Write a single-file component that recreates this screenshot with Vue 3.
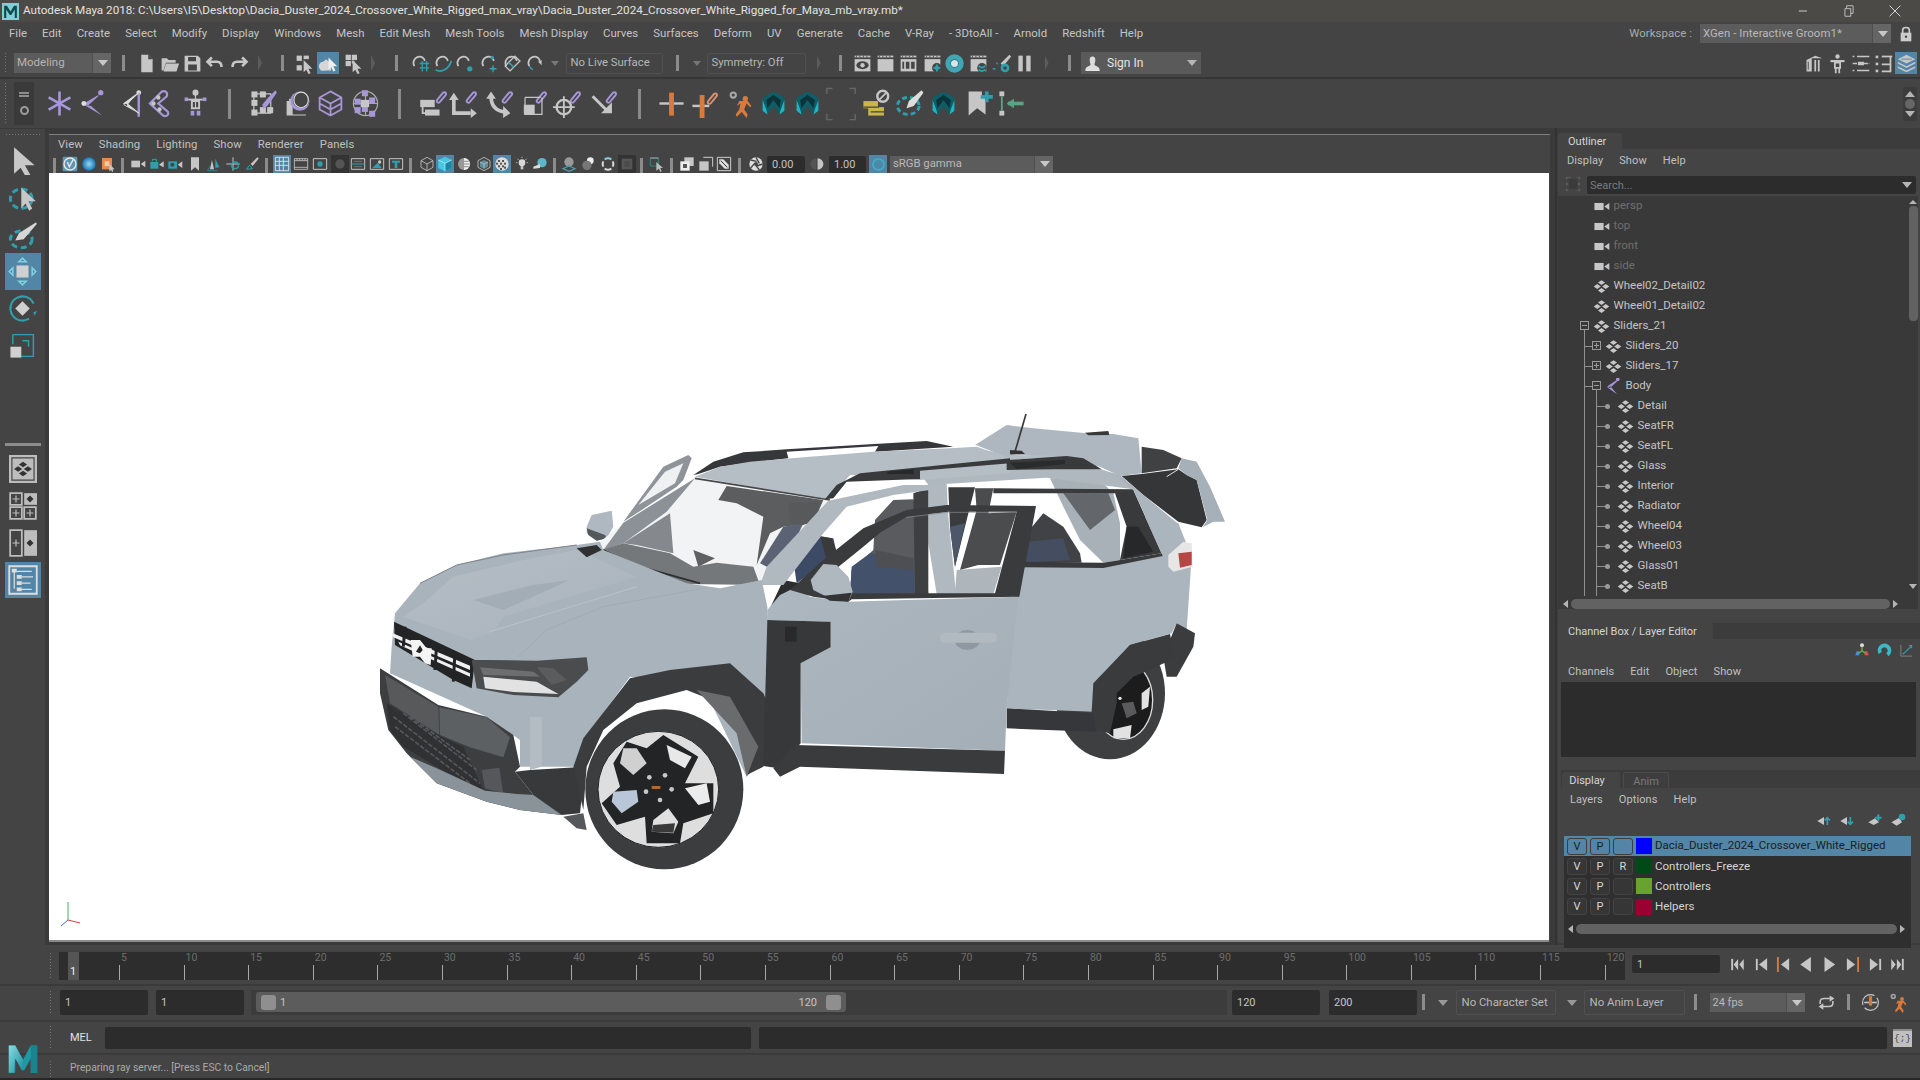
<script setup>
const G = '#c6c6c6', PU = '#a796d8', TE = '#2f9fae', OR = '#d9793b', D = '#444444'
const p = (d, f = G) => `<path d="${d}" fill="${f}" fill-rule="evenodd"/>`
const s = (d, c = G, w = 2) => `<path d="${d}" fill="none" stroke="${c}" stroke-width="${w}"/>`
const r = (x, y, w, h, f = G) => `<rect x="${x}" y="${y}" width="${w}" height="${h}" fill="${f}"/>`
const o = (x, y, R, f = G) => `<circle cx="${x}" cy="${y}" r="${R}" fill="${f}"/>`
const arrow = p('M11 8l10 10h-4.500l2.500 5-2.500 1-2.500-5-3 3z')
const clap = r(3, 3, 18, 2) + s('M5 3v2M9 3v2M13 3v2M17 3v2', D, 1) + r(3, 7, 18, 14)
const link = s('M15 9l5-6c2-1 3 1 2 2l-5 6c-2 1-3-1-2-2z', PU, 1.600)
const xfd = p('M12 3l5 3.500-5 3.500-5-3.500zM12 14l5 3.500-5 3.500-5-3.500zM6 8.500l5 3.500-5 3.500L1 12zM18 8.500l5 3.500-5 3.500-5-3.500z')
const magnet = s('M5 15c-3-5 1-11 6-11 3 0 5 2 6 5', G, 2)
const arn = p('M12 2l9 5v11l-4 3-5-7-5 7-4-3V7z', '#0f5d66') + p('M12 5l6 4-1 7-5-7-5 7-1-7z', '#0a3439') + p('M3 9l3 8 1 4-4-3zM21 9l-3 8-1 4 4-3z', '#23b4c0')
const SYM = {
  file: p('M6 2h8l5 5v15H6z') + p('M14 2v5h5z', D),
  open: p('M3 6h6l2 2h8v3H8l-3 9H3z') + p('M8 12h15l-3 9H5z'),
  save: p('M3 3h15l3 3v15H3zM7 4.500v5h9v-5zM7 13v7h10v-7z'),
  undo: s('M9 5l-5 5 5 5M4 10h11c4 0 5 3 5 6', G, 3),
  redo: s('M15 5l5 5-5 5M20 10H9c-4 0-5 3-5 6', G, 3),
  selh: r(3, 3, 6, 6) + r(3, 14, 6, 6) + r(11, 3, 6, 4) + arrow,
  selo: p('M9 7l6 5v8H3v-7z', '#d6d6d6') + o(6, 15, 5, '#d6d6d6') + p('M12 5l10 10h-4.500l2.500 5-2.500 1-2.500-5-3 3z', '#eee'),
  selc: r(3, 2, 6, 6) + r(10, 2, 6, 6) + r(3, 9, 6, 6) + r(10, 9, 3, 3) + arrow,
  sgrid: magnet + s('M11 12h11M11 17h11M14 9v12M19 9v12', TE, 1.500),
  scurve: magnet + s('M3 19c6 4 15 0 18-10', TE, 2),
  spoint: magnet + o(18, 18, 3, TE),
  sview: magnet + o(15, 5, 2, TE) + s('M16 14v8M12 18h8', TE, 1.500) + o(16, 18, 2, TE),
  ssurf: `<g transform="rotate(-45 12 12)">${s('M4 8h16v8H4z', G, 1.500)}${s('M10 8v8', TE, 2)}</g>` + magnet,
  smag: magnet + p('M15 10l4-2v6z', G) + s('M5 15c1 2 2 3 4 4', TE, 1.500),
  reye: clap + `<ellipse cx="12" cy="14" rx="7" ry="4.500" fill="#444"/>` + o(12, 14, 2.500),
  rfr: clap,
  ripr: clap + r(5, 10, 2, 8, '#444') + r(9, 10, 4, 8, '#444') + r(15, 10, 4, 8, '#444'),
  rset: clap + o(17, 17, 5.500, D) + s('M17 13v8M13 17h8', TE, 2) + o(17, 17, 2.500, TE),
  ring: `<circle cx="12" cy="12" r="7.500" fill="none" stroke="#3ea6b4" stroke-width="6"/>` + o(12, 12, 4, '#d0e8ee'),
  rseq: clap + o(16, 17, 5.500, D) + s('M12 15l4 2 4-2M12 19l4 2 4-2', TE, 2),
  batch: p('M21 2l2 2-9 11-3-3z') + o(16, 17, 5, TE) + o(16, 17, 2, D) + s('M2 18h3M6 11l2 2', TE, 1.500),
  pause: r(5, 3, 5, 18) + r(14, 3, 5, 18),
  user: p('M12 2c3 0 4 2 4 5 0 4-2 6-1 7 2 2 7 2 7 7H2c0-5 5-5 7-7 1-1-1-3-1-7 0-3 1-5 4-5z', '#ddd') + r(2, 21, 20, 1.500, '#eee'),
  mtk: p('M4 8l10-5 8 3H10v15H4z') + s('M14 8v13M18 8v13', G, 2) + s('M6 10v9', D, 1),
  hik: o(12, 4, 2.500) + r(4, 8, 16, 2.500) + s('M9 11h6v6H9zM10 17v6M14 17v6', G, 2),
  attr: s('M8 4h14M8 20h14M3 4h2M3 12h5M16 12h6M3 20h2', G, 1.500) + s('M9 9h12v6H9z', D, 1) + r(9, 10, 7, 4),
  toolset: r(3, 3, 3, 3) + r(3, 11, 3, 3) + r(3, 19, 3, 3) + r(10, 3, 12, 2) + s('M20 4v18', G, 2) + r(10, 12, 10, 2) + r(10, 20, 10, 2),
  chan: p('M12 2l10 5-10 5L2 7z') + p('M2 10l10 5 10-5v2l-10 5-10-5z') + p('M2 15l10 5 10-5v2l-10 5-10-5z') + s('M6 7h12', '#5285a6', 1),
  star: s('M12 2v20M3 7l18 10M21 7L3 17', PU, 2.200),
  joint: o(18, 3, 2.200, PU) + p('M16 5L4 12l3 2 9-8zM4 13l15 9-9-8z', PU) + o(4, 12, 2, '#ddd'),
  ik: o(18, 3, 2, '#ddd') + p('M16 4L5 12l3 2z M5 13l11 6-8-7z', '#ddd') + s('M18 3v20', PU, 2) + s('M18 3L8 12l10 8', '#ddd', 1),
  spline: s('M4 12L14 2c3-1 5 1 4 4l-7 6 8 7c1 3-2 4-4 3z', PU, 1.800) + o(11, 7, 1.800) + o(7, 12, 1.800) + o(12, 17, 1.800),
  body: o(12, 3, 2.500) + r(3, 7, 3, 3, PU) + r(18, 7, 3, 3, PU) + r(6, 8, 12, 1.500) + s('M9 10h6v6H9z', G, 1.600) + r(8, 18, 3, 4, PU) + r(13, 18, 3, 4, PU) + s('M12 5v11', G, 1),
  paint: s('M4 4h14v16H4z', G, 1) + [[2, 2], [9, 2], [2, 9], [9, 15], [2, 17], [15, 15]].map(a => r(a[0], a[1], 5, 5)).join('') + p('M22 1l1 2-7 10-4 4-1-4 4-5z', PU),
  shape: p('M5 8h3v13h11v1H3V10h2z', G) + `<ellipse cx="14" cy="10" rx="8" ry="8" fill="${PU}"/>` + `<ellipse cx="15" cy="9" rx="7" ry="7" fill="#444"/>` + `<ellipse cx="15" cy="9" rx="6" ry="6.500" fill="none" stroke="#ddd"/>`,
  latt: s('M12 2l9 5v10l-9 5-9-5V7zM3 7l9 5 9-5M12 12v10M3 12l9 5 9-5', PU, 1.500),
  clus: `<circle cx="12" cy="12" r="10" fill="none" stroke="#aaa"/>` + s('M12 2v20M2 12h20', '#aaa', 1) + [[9, 1], [15, 7], [9, 14], [15, 18], [3, 8], [3, 15]].map(a => r(a[0], a[1], 5, 5, PU)).join('') + r(8, 9, 7, 6),
  l1: link + r(1, 9, 12, 6) + r(5, 17, 12, 5) + s('M3 13v7h5', G, 1.500),
  l2: link + s('M4 9v11h14', G, 3) + p('M4 3l4 6H0zM18 16l5 4-5 4z'),
  l3: link + s('M5 6c0 8 4 12 11 13', G, 3) + p('M5 2l4 6H1zM15 14v10l6-4z'),
  l4: link + s('M5 7h13M5 7v14h14V7', G, 1) + r(4, 13, 9, 8),
  l5: link + `<circle cx="9" cy="15" r="6" fill="none" stroke="${G}" stroke-width="2"/>` + s('M9 6v18M0 15h18', G, 1.500),
  l6: link + s('M3 6l13 13', G, 2.500) + p('M10 20h9v-9z'),
  c1: r(2, 11, 20, 2) + r(10, 3, 4, 19, OR),
  c2: r(2, 13, 14, 2) + r(8, 5, 4, 19, OR) + s('M15 10l5-6c2-1 3 1 2 2l-5 6c-2 1-3-1-2-2z', '#d79272', 1.600),
  run: o(6, 5, 3, '#a8a8a8') + o(6, 5, 1.300, D) + o(16, 8, 2.200, OR) + p('M11 10h7l3 4-1 1-3-3-2 5 3 4-1 3-4-5-4 4-1-2 3-4 1-5-3 2z', OR),
  arn,
  bracket: s('M2 5V1h4M18 1h4v4M2 19v4h4M18 23h4v-4', '#666', 1),
  ref: r(2, 10, 12, 6, '#c9b54a') + r(6, 15, 13, 7, '#c9b54a') + s('M2 15h13M8 19h12', D, 1) + `<circle cx="18" cy="6" r="4.500" fill="none" stroke="${G}" stroke-width="2"/>` + s('M15 9l6-6', G, 1.500),
  lbrush: `<ellipse cx="11" cy="14" rx="9" ry="7" fill="none" stroke="${TE}" stroke-width="2.400" stroke-dasharray="4 2.500"/>` + p('M22 1l1.500 2-8 11-6 2 2-6z', '#ddd'),
  bkm: p('M3 2h11v4h3v15l-7-5-7 6z') + s('M18 2v9M13 6.500h10', TE, 3),
  piv: r(2, 2, 4, 4) + r(2, 18, 4, 4) + s('M4 6v12', '#5aa486', 1.500) + s('M22 12H9', '#5aa486', 3) + p('M8 12l6-4v8z', '#5aa486'),
  vsel: `<rect x="1" y="1" width="22" height="22" rx="2" fill="#5f94b3"/>` + `<circle cx="12" cy="12" r="9" fill="none" stroke="#e8e8e8" stroke-width="2"/>` + s('M8 9l3 7 6-11', '#e8e8e8', 2),
  ball: `<radialGradient id="bg1"><stop offset="0" stop-color="#9bd8f0"/><stop offset="1" stop-color="#1878b8"/></radialGradient><circle cx="12" cy="12" r="10" fill="url(#bg1)"/>`,
  hilit: r(3, 3, 15, 17, '#e68a4e') + r(7, 8, 7, 7, '#f2c6a3') + p('M14 12l8 8h-3l1 3-2 1-1-3-3 2z'),
  cam: r(2, 7, 13, 10) + p('M16 12l7-5v10z'),
  camlk: r(2, 9, 12, 10, TE) + p('M15 13l7-5v9z') + s('M5 8V5h6v4', TE, 1.500),
  camrot: r(2, 8, 13, 11, TE) + p('M16 13l7-5v10z') + o(8, 13, 3, D),
  bkmk: p('M6 2h12v20l-6-5-6 5z'),
  tumble: p('M6 20l3-14 3 14z', G) + s('M3 22h14M2 22l5-8', TE, 1) + p('M14 4v14l6-1z', TE),
  track: s('M12 2v20M2 12h20', G, 1.500) + `<circle cx="15" cy="14" r="5" fill="none" stroke="${TE}" stroke-width="2"/>`,
  brush: p('M20 2l2 2-9 11-3-3z') + s('M4 20l4-6 5 5z', TE, 1.500),
  grid: s('M2 2h20v20H2zM8 2v20M14 2v20M2 8h20M2 14h20', '#e8e8e8', 1.300),
  film: s('M2 4h20v16H2zM2 7h20M2 17h20M6 4v3M10 4v3M14 4v3M18 4v3', '#ccc', 1.200),
  res: s('M2 4h20v16H2z', '#ccc', 1.400) + o(12, 12, 4, TE),
  dark: o(12, 12, 7, '#555'),
  safe: s('M2 4h20v16H2z', '#ccc', 1.400) + s('M2 12h20', TE, 1.500) + s('M6 8h12M6 16h12', '#888', 1),
  mount: s('M2 4h20v16H2z', '#ccc', 1.400) + p('M5 18l8-8 6 8z', TE) + o(16, 9, 2.500),
  tbox: s('M2 4h20v16H2z', '#ccc', 1.400) + p('M6 7h12v3h-4v8h-4v-8H6z', TE),
  wire: s('M12 2l9 5v10l-9 5-9-5V7zM3 7l9 5 9-5M12 12v10', '#ccc', 1.200),
  solid: p('M12 1l10 5v12l-10 5-10-5V6z', '#45c8e0') + p('M12 11l10-5v12l-10 5z', '#1a88a5') + s('M2 6l10 5 10-5M12 11v12', '#d8f4fa', 1),
  half: `<circle cx="12" cy="12" r="9" fill="#999"/>` + p('M12 3a9 9 0 0 1 0 18z', '#eee') + s('M12 8h7M12 12h8M12 16h7', '#555', 1),
  wiret: s('M12 2l9 5v10l-9 5-9-5V7z', '#ccc', 1.200) + p('M12 6l6 3v7l-6 3-6-3V9z', '#5d8d99') + s('M6 9l6 3 6-3M12 12v7', '#ccc', 1),
  check: `<circle cx="12" cy="12" r="10" fill="#ddd"/>` + [[6, 6], [12, 6], [9, 10], [15, 10], [6, 14], [12, 14], [9, 18], [3, 10], [15, 16]].map(a => r(a[0], a[1], 3, 3, '#555')).join(''),
  light: o(12, 10, 5, '#d8d8d8') + r(10, 15, 4, 5) + s('M12 1v2M3 10h2M19 10h2M5 4l2 2M19 4l-2 2', G, 1.200),
  shad: o(15, 10, 7, '#5fb6c6') + p('M2 16l10-4v6l-10 1z', '#ddd'),
  occ: `<circle cx="12" cy="9" r="7" fill="#999"/>` + s('M3 19l9 4 9-4-9-4z', '#4b9aa7', 2),
  aa: o(14, 7, 5, '#eee') + o(9, 14, 7, '#777'),
  mb: s('M17 5A9 9 0 0 0 7 5', '#88d0dc', 3) + s('M7 19a9 9 0 0 0 10 0M5 8a9 9 0 0 0 0 8M19 8a9 9 0 0 1 0 8', '#d8d8d8', 3),
  dof: r(4, 4, 16, 16, '#555') + r(8, 8, 8, 8, '#4a4a4a'),
  isol: s('M2 3h12v12H2z', TE, 1) + s('M2 3h12', '#ccc', 1) + p('M11 9l10 9h-4l2 5-2 1-2-5-4 3z', '#bbb'),
  xray: r(8, 2, 14, 13) + r(2, 8, 14, 14, '#eee') + r(6, 12, 6, 6, '#555'),
  xray2: s('M8 2h14v14', '#ccc', 1.500) + r(2, 8, 14, 14),
  wedge: s('M2 2h20v20H2z', '#ccc', 1.500) + p('M5 5h6l8 8v6h-6L5 11z', '#ddd') + s('M7 7l10 10', '#333', 1.500),
  aper: `<circle cx="12" cy="12" r="10" fill="#ddd"/>` + s('M12 2l5 9M22 12l-9 3M17 21l-6-8M4 18l6-7M4 6l9 2', '#444', 2) + o(12, 12, 3, '#444'),
  halfo: p('M11 2a10 10 0 0 0 0 20z', '#555') + p('M13 2a10 10 0 0 1 0 20z'),
  on: `<circle cx="12" cy="12" r="10" fill="#34b7c5"/>` + `<circle cx="12" cy="12" r="7.500" fill="#4f87a6"/>`,
  select: p('M5 1l17 15h-8l4.500 8-3.500 2-4.500-8L5 23z', '#c8c8c8'),
  lasso: `<ellipse cx="11" cy="13" rx="9" ry="8" fill="none" stroke="${TE}" stroke-width="2.500" stroke-dasharray="5 3"/>` + p('M11 4l12 11h-6l3 6-2.500 2-3-6-3.500 4z', '#c8c8c8'),
  psel: `<ellipse cx="11" cy="16" rx="9" ry="7" fill="none" stroke="${TE}" stroke-width="2.500" stroke-dasharray="5 3"/>` + p('M23 2l1 1-11 13-7 1 3-6z', '#d6d6d6'),
  move: r(7, 7, 10, 10, '#d0d0d0') + s('M9 4l3-3 3 3zM9 20l3 3 3-3zM4 9l-3 3 3 3zM20 9l3 3-3 3z', '#7fd2de', 1.300),
  rot: `<circle cx="12" cy="12" r="10" fill="none" stroke="${TE}" stroke-width="1.700" stroke-dasharray="48 14" transform="rotate(60 12 12)"/>` + p('M12 6l6 6-6 6-6-6z', '#d0d0d0') + p('M21 15l3-1-2 4z', TE),
  scale: s('M4 3h17v18H11', TE, 1.200) + s('M4 3v8', TE, 1.200) + r(2, 13, 9, 9, '#d0d0d0') + s('M12 8h5v5', TE, 1.200),
  single: r(0, 0, 24, 24, '#bdbdbd') + s('M2.500 2.500h19v19h-19z', '#444', 1) + `<g transform="translate(3.600 3.600) scale(.7)">${xfd.replaceAll('#c6c6c6', '#333')}</g>`,
  four: s('M1 1h10v10H1zM1 13h10v10H1zM13 13h10v10H13z', '#bdbdbd', 1.500) + r(13, 1, 11, 10, '#bdbdbd') + s('M6 3v6M3 6h6M6 15v6M3 18h6M18 15v6M15 18h6', '#bdbdbd', 1) + p('M18 3l3 3-3 3-3-3z', '#333'),
  two: s('M1 1h10v22H1z', '#bdbdbd', 1.500) + r(13, 1, 11, 22, '#bdbdbd') + s('M6 9v6M3 12h6', '#bdbdbd', 1) + p('M18 9l3 3-3 3-3-3z', '#333'),
  outl: s('M1 1h22v22H1z', '#ddd', 1.500) + s('M5 5v14', '#ddd', 1) + r(3, 3, 4, 3, '#ddd') + r(7, 8, 4, 3, '#ddd') + r(7, 13, 4, 3, '#ddd') + r(7, 18, 4, 3, '#ddd') + s('M7 5h12M11 9.500h9M11 14.500h7M11 19.500h8', '#ddd', 1),
  logo: `<linearGradient id="lg1" x1="0" y1="0" x2="1" y2="1"><stop offset="0" stop-color="#8adbe0"/><stop offset="1" stop-color="#16909e"/></linearGradient>` + p('M1 23V2h5l6 11 6-11h5v21h-5V12l-5 9h-2l-5-9v11z', '#1f98a6') + p('M1 2h5l6 11v8l-6-9-1 11H1z', 'url(#lg1)') + p('M18 2h5v21h-5z', '#17848f'),
  logo2: r(0, 0, 24, 24, '#7fd0d6') + p('M3 21V4h4l5 8 5-8h4v17h-3V9l-5 8h-2L6 9v12z', '#12494f'),
  minim: s('M3 12h14', '#ddd', 1.500),
  resto: s('M8 7V3h11v13h-4M5 8h10v13H5z', '#ddd', 1.300),
  closex: s('M4 4l16 16M20 4L4 20', '#ddd', 1.400),
  lock: s('M7 11V6c0-5 10-5 10 0v5', '#ccc', 2.500) + r(4, 10, 16, 13, '#ccc') + o(12, 16, 1.800, '#444'),
  xf: xfd,
  jnt: o(18, 2, 2.500, PU) + p('M16 3L3 12l4 2 10-9zM3 13l14 10-9-11z', PU),
  outf: s('M5 2H2v3M19 2h3v3M2 19v3h3M22 19v3h-3M5 2h3', '#666', 1.400) + r(6, 5, 12, 14, '#3b3b3b') + p('M2 9l3 3-3 3zM22 9l-3 3 3 3z', '#666'),
  gizmo: o(12, 5, 3, '#ddd') + p('M4 14l4 0 0 6-6 0z', '#4a90d9') + p('M20 14l-4 0 0 6 6 0z', '#d9534a') + s('M12 7v6M12 13l-5 4M12 13l5 4', '#69b34c', 2),
  chanset: `<circle cx="12" cy="12" r="8" fill="none" stroke="#3eb8c8" stroke-width="6" stroke-dasharray="36 14" transform="rotate(150 12 12)"/>`,
  cgraph: s('M3 3v18h18', '#888', 1.400) + s('M6 18L20 5', TE, 1.800) + p('M21 3v6l-6-6z', TE),
  lup: p('M2 12l10-6v12z') + s('M17 18V8M13 11l4-4 4 4', TE, 2.600),
  ldn: p('M2 12l10-6v12z') + s('M17 6v10M13 13l4 4 4-4', TE, 2.600),
  ladd: p('M2 14l10-6 6 6-8 4z') + s('M17 2v10M12 7h10', TE, 3),
  lsel: p('M2 14l12-7 4 7-8 5z') + o(18, 6, 5, TE),
  start: r(2, 3, 3, 18) + p('M13 3v18l-7-9zM22 3v18l-7-9z'),
  prevk: r(3, 3, 3, 18) + p('M21 2v20L8 12z'),
  prevkey: s('M3 0v24', OR, 3) + p('M21 2v20L8 12z'),
  back: p('M19 0v24L2 12z'),
  play: p('M4 0v24l17-12z'),
  nextkey: s('M21 0v24', OR, 3) + p('M3 2v20l13-10z'),
  nextk: r(18, 3, 3, 18) + p('M3 2v20l13-10z'),
  end: r(19, 3, 3, 18) + p('M2 3v18l7-9zM11 3v18l7-9z'),
  loop: s('M4 14v-3c0-3 2-4 5-4h11M20 10v3c0 3-2 4-5 4H4', G, 2) + p('M16 3l6 4-6 4zM8 13l-6 4 6 4z'),
  autok: `<circle cx="12" cy="12" r="10" fill="none" stroke="${G}" stroke-width="1.500" stroke-dasharray="24 4"/>` + r(4, 11, 16, 2) + r(10, 4, 4, 12, OR),
}
const slot = (items, start, size) => {
  let prev = start
  return items.map(([n, c]) => {
    const kind = n[0] === '*' ? 'act' : n[0] === '#' ? 'drk' : n === '|' ? 'sep' : n === '>' ? 'col' : ''
    const name = kind && n.length > 1 ? n.slice(1) : n
    const w = kind === 'sep' ? 3 : kind === 'col' ? 4 : size
    const ml = c - w / 2 - prev
    prev = c + w / 2
    return { name, kind, w, ml }
  })
}
const menus = ['File', 'Edit', 'Create', 'Select', 'Modify', 'Display', 'Windows', 'Mesh', 'Edit Mesh', 'Mesh Tools', 'Mesh Display', 'Curves', 'Surfaces', 'Deform', 'UV', 'Generate', 'Cache', 'V-Ray', '- 3DtoAll -', 'Arnold', 'Redshift', 'Help']
const st1 = slot([['|', 123], ['file', 146], ['open', 169], ['save', 192], ['undo', 214], ['redo', 239], ['>', 260], ['|', 282], ['selh', 304], ['*selo', 328], ['selc', 353], ['>', 373], ['|', 396], ['sgrid', 420], ['scurve', 443], ['spoint', 464], ['sview', 489], ['ssurf', 512], ['smag', 535]], 111, 22)
const st2 = slot([['>', 818], ['|', 840], ['reye', 862], ['rfr', 885], ['ripr', 908], ['rset', 932], ['ring', 954], ['rseq', 978], ['batch', 1001], ['pause', 1024], ['>', 1046], ['|', 1069]], 805, 21)
const st3 = slot([['mtk', 1813], ['hik', 1837], ['attr', 1860], ['toolset', 1883], ['*chan', 1906]], 1200, 22)
const sh1 = slot([['star', 59], ['joint', 93], ['ik', 131], ['spline', 159], ['body', 195], ['|', 229], ['paint', 263], ['shape', 297], ['latt', 330], ['clus', 365], ['|', 399], ['l1', 433], ['l2', 463], ['l3', 499], ['l4', 533], ['l5', 567], ['l6', 603], ['|', 639], ['c1', 671], ['c2', 704], ['run', 740], ['arn', 773], ['arn', 807], ['bracket', 841], ['ref', 875], ['lbrush', 909], ['arn', 943], ['bkm', 979], ['piv', 1011]], 34, 27)
const pt1 = slot([['|', 54], ['vsel', 70], ['ball', 89], ['hilit', 108], ['|', 122], ['cam', 138], ['camlk', 157], ['camrot', 175], ['bkmk', 195], ['tumble', 214], ['track', 233], ['brush', 252], ['|', 266], ['*grid', 282], ['film', 301], ['res', 320], ['#dark', 340], ['safe', 358], ['mount', 377], ['tbox', 396], ['|', 410], ['wire', 427], ['*solid', 445], ['half', 464], ['wiret', 484], ['*check', 502], ['light', 522], ['shad', 540], ['|', 554], ['occ', 569], ['aa', 589], ['mb', 608], ['#dof', 627], ['|', 641], ['isol', 657], ['|', 671], ['xray', 687], ['xray2', 706], ['wedge', 724], ['|', 739], ['aper', 756]], 49, 18)
const leftTools = [['select'], ['lasso'], ['psel'], ['move', 1], ['rot'], ['scale']]
const tree = [
  { t: 'persp', i: 'cam', d: 0, dim: 1 }, { t: 'top', i: 'cam', d: 0, dim: 1 }, { t: 'front', i: 'cam', d: 0, dim: 1 }, { t: 'side', i: 'cam', d: 0, dim: 1 },
  { t: 'Wheel02_Detail02', i: 'xf', d: 0 }, { t: 'Wheel01_Detail02', i: 'xf', d: 0 },
  { t: 'Sliders_21', i: 'xf', d: 0, e: 'minus', top: 1 },
  { t: 'Sliders_20', i: 'xf', d: 1, e: 'plus', l1: 1 }, { t: 'Sliders_17', i: 'xf', d: 1, e: 'plus', l1: 1 },
  { t: 'Body', i: 'jnt', d: 1, e: 'minus', l1: 1, open: 1 },
  ...['Detail', 'SeatFR', 'SeatFL', 'Glass', 'Interior', 'Radiator', 'Wheel04', 'Wheel03', 'Glass01', 'SeatB'].map(t => ({ t, i: 'xf', d: 2, dot: 1, l1: 1, l2: 1 })),
]
const layers = [
  { n: 'Dacia_Duster_2024_Crossover_White_Rigged', c: '#0000ff', r: '', sel: 1 },
  { n: 'Controllers_Freeze', c: '#004a17', r: 'R' },
  { n: 'Controllers', c: '#69a32f', r: '' },
  { n: 'Helpers', c: '#9b0033', r: '' },
]
const ticks = Array.from({ length: 24 }, (_, i) => (i + 1) * 5)
const play = slot([['start', 1738], ['prevk', 1762], ['prevkey', 1784], ['back', 1807], ['play', 1830], ['nextkey', 1853], ['nextk', 1876], ['end', 1898]], 1720, 15)
const bolts = [[838, 832], [885, 826], [905, 868], [870, 900], [828, 875]]
</script>

<template>
  <div class="app">
    <svg class="defs" width="0" height="0">
      <symbol v-for="(v, k) in SYM" :id="k" :key="k" viewBox="0 0 24 24" v-html="v"></symbol>
    </svg>

    <header class="title">
      <svg class="logo2" width="17" height="17"><use href="#logo2" /></svg>
      <span class="title-text">Autodesk Maya 2018: C:\Users\I5\Desktop\Dacia_Duster_2024_Crossover_White_Rigged_max_vray\Dacia_Duster_2024_Crossover_White_Rigged_for_Maya_mb_vray.mb*</span>
      <div class="winbtns">
        <svg width="14" height="14"><use href="#minim" /></svg>
        <svg width="14" height="14"><use href="#resto" /></svg>
        <svg width="16" height="16"><use href="#closex" /></svg>
      </div>
    </header>

    <nav class="menubar">
      <span v-for="m in menus" :key="m">{{ m }}</span>
      <div class="workspace">
        <span class="ws-label">Workspace :</span>
        <div class="dd ws-dd"><span>XGen - Interactive Groom1*</span><i class="dd-arrow"></i></div>
        <svg width="16" height="18"><use href="#lock" /></svg>
      </div>
    </nav>

    <section class="status">
      <span class="grip"></span>
      <div class="dd mode-dd"><span>Modeling</span><i class="dd-arrow"></i></div>
      <div v-for="(it, k) in st1" :key="'a' + k" class="cell" :class="it.kind" :style="{ width: it.w + 'px', marginLeft: it.ml + 'px' }">
        <svg v-if="!it.kind || it.kind === 'act'" width="21" height="21"><use :href="'#' + it.name" /></svg>
      </div>
      <i class="tri tri-small"></i>
      <div class="field live">No Live Surface</div>
      <span class="sep sep-sym"></span>
      <i class="tri tri-small tri-sym"></i>
      <div class="field sym">Symmetry: Off</div>
      <div class="st2">
        <div v-for="(it, k) in st2" :key="'b' + k" class="cell" :class="it.kind" :style="{ width: it.w + 'px', marginLeft: it.ml + 'px' }">
          <svg v-if="!it.kind" width="21" height="21"><use :href="'#' + it.name" /></svg>
        </div>
      </div>
      <div class="dd sign"><svg width="17" height="19"><use href="#user" /></svg><span>Sign In</span><i class="tri"></i></div>
      <div class="st3">
        <div v-for="(it, k) in st3" :key="'c' + k" class="cell" :class="it.kind" :style="{ width: it.w + 'px', marginLeft: (k ? it.ml : 0) + 'px' }">
          <svg width="21" height="21"><use :href="'#' + it.name" /></svg>
        </div>
      </div>
    </section>

    <section class="shelf">
      <span class="grip grip-tall"></span>
      <div class="shelf-tab"><span class="eq"></span><span class="gear"></span></div>
      <div v-for="(it, k) in sh1" :key="'d' + k" class="cell" :class="it.kind" :style="{ width: it.w + 'px', marginLeft: it.ml + 'px' }">
        <svg v-if="it.kind !== 'sep'" :width="it.name === 'bracket' ? 34 : 29" :height="it.name === 'bracket' ? 34 : 29"><use :href="'#' + it.name" /></svg>
      </div>
      <div class="shelf-scroll"><i class="tri tri-up"></i><b></b><i class="tri"></i></div>
    </section>

    <main class="main">
      <aside class="left">
        <span class="hgrip"></span>
        <div class="tools">
          <div v-for="t in leftTools" :key="t[0]" class="tool" :class="{ on: t[1] }">
            <svg width="29" height="29"><use :href="'#' + t[0]" /></svg>
          </div>
        </div>
        <div class="left-rule"></div>
        <div class="layouts">
          <svg width="28" height="28"><use href="#single" /></svg>
          <svg width="28" height="28"><use href="#four" /></svg>
          <svg width="28" height="28"><use href="#two" /></svg>
          <div class="tool on"><svg width="30" height="30"><use href="#outl" /></svg></div>
        </div>
      </aside>

      <section class="panel">
        <div class="p-menu">
          <span>View</span><span>Shading</span><span>Lighting</span><span>Show</span><span>Renderer</span><span>Panels</span>
        </div>
        <div class="p-tools">
          <div v-for="(it, k) in pt1" :key="'e' + k" class="cell" :class="it.kind" :style="{ width: it.w + 'px', marginLeft: it.ml + 'px' }">
            <svg v-if="it.kind !== 'sep'" width="16" height="16"><use :href="'#' + it.name" /></svg>
          </div>
          <div class="vf v0">0.00</div>
          <svg class="halfi" width="14" height="14"><use href="#halfo" /></svg>
          <div class="vf v1f">1.00</div>
          <div class="onbtn"><svg width="15" height="15"><use href="#on" /></svg></div>
          <div class="dd gamma"><span>sRGB gamma</span><i class="dd-arrow"></i></div>
        </div>
        <div class="viewport">
          <svg class="car" viewBox="0 0 1920 1080">
            <defs>
              <linearGradient id="doorg" x1="0" y1="0" x2="1" y2="1"><stop offset="0" stop-color="#adb7bf" /><stop offset="1" stop-color="#a4aeb7" /></linearGradient>
              <linearGradient id="hoodg" x1="0" y1="0" x2="1" y2="1"><stop offset="0" stop-color="#b5bec5" /><stop offset="1" stop-color="#a9b3bc" /></linearGradient>
            </defs>
            <!-- rear part, crop C coordinates -->
            <g transform="translate(780 410) scale(.33333)">
              <path d="M585 105L680 45L760 55L920 70L1000 72L1075 85L1085 190L1020 198L960 170L700 130Z" fill="#aeb7bf" />
              <path d="M915 68L985 63L988 75L925 76Z" fill="#37383a" />
              <path d="M1085 110L1150 120L1205 145L1190 175L1085 190Z" fill="#404142" />
              <path d="M1025 198L1085 192L1195 178L1220 195L1250 210L1280 330L1265 352L1195 335L1090 255Z" fill="#353637" />
              <path d="M1195 175L1205 145L1250 155L1290 230L1335 335L1300 335L1268 352L1282 330L1250 210L1220 195Z" fill="#a6b0b8" />
              <path d="M1160 200L1195 178" stroke="#e6e6e6" stroke-width="3" />
              <path d="M738 12L705 125" stroke="#3a3a3a" stroke-width="5" />
              <path d="M685 120L725 122L735 132L690 134Z" fill="#333" />
              <!-- rear wheel -->
              <ellipse cx="990" cy="850" rx="165" ry="198" fill="#3e3f40" />
              <ellipse cx="1030" cy="870" rx="88" ry="118" fill="#1c1c1d" stroke="#dcdcdc" stroke-width="4" />
              <path d="M1000 958L1055 945L1050 985L1000 985Z M1085 850L1110 830L1105 890L1085 900Z" fill="#e2e2e2" />
              <path d="M1025 880L1060 875L1070 910L1040 925Z" fill="#5a5a5c" />
              <circle cx="1020" cy="865" r="5" fill="#e8e8e8" />
              <!-- rear roof pillar and window contents -->
              <path d="M810 205L950 200L1000 250L1020 340L1020 450L970 458L900 390L850 290Z" fill="#a8b1b8" />
              <path d="M850 250L985 250L1005 300L930 360Z" fill="#63666a" />
              <path d="M740 370L790 310L850 350L900 430L905 458L735 460Z" fill="#404246" />
              <path d="M745 395L850 385L870 450L735 458Z" fill="#454e60" />
              <path d="M1005 250L1060 240L1145 430L1020 450L1040 350Z" fill="#393a3b" />
              <path d="M1040 350L1075 350L1120 425L1030 445Z" fill="#27282a" />
              <path d="M640 235L1060 238L1062 250L640 250Z" fill="#3a3b3c" />
              <!-- rear quarter -->
              <path d="M715 470L970 472L1145 432L1095 320L1195 340L1235 440L1220 660L1190 640L1175 670L1050 705L945 820L940 905L680 895L700 600Z" fill="#abb5bd" />
              <path d="M960 178L1020 195L1090 255L1195 342L1148 432L1060 240Z" fill="#abb5bd" />
              <path d="M730 456L970 458L1145 430L1148 438L970 474L730 472Z" fill="#393a3b" />
              <path d="M1165 435L1210 395L1235 400L1238 470L1180 485L1165 470Z" fill="#e6e6e6" />
              <path d="M1195 430L1235 425L1235 465L1200 473Z" fill="#b64646" />
              <path d="M1190 640L1245 670L1240 710L1190 800L1160 800L1150 740Z" fill="#3b3c3d" />
              <path d="M940 820L1050 705L1170 672L1185 745L1140 765L1110 780L1060 800L1010 850L1010 880L990 970L950 960L935 905Z" fill="#3a3b3c" />
              <path d="M680 895L940 910L950 965L800 960L680 955Z" fill="#36373a" />
              <!-- roof side -->
              <path d="M610 120L700 135L860 138L500 162Z" fill="#b5bdc4" />
              <path d="M420 190L680 168L965 178L1000 195L1060 238L800 203L445 225Z" fill="#b0b8bf" />
              <!-- interior seen through door -->
              <path d="M585 235L640 235L625 310L710 305L660 465L595 465L540 480L590 300Z" fill="#4b4c4e" />
              <path d="M530 480L665 470L640 552L525 552Z" fill="#aeb5bb" />
              <path d="M505 232L585 232L560 330L525 470L510 350Z" fill="#3a3b3d" />
              <path d="M510 350L555 340L525 470Z" fill="#4d576a" />
              <path d="M445 222L500 222L505 320L525 520L530 552L470 552L445 400Z" fill="#b1b9c0" />
              <path d="M285 330L340 270L400 268L430 330L445 552L210 552L215 480L280 420Z" fill="#595b5e" />
              <path d="M400 250L445 235L445 552L405 552Z" fill="#3e3f41" />
              <path d="M215 470L270 430L400 450L405 548L210 552Z" fill="#44516a" />
              <path d="M285 420L400 445L400 480L290 470Z" fill="#4e4f52" />
            </g>

            <!-- upper front, crop B coordinates -->
            <g transform="translate(570 410) scale(.33333)">
              <path d="M160 335L280 170L355 135L365 145L340 210L320 230L215 300Z" fill="#8e9499" />
              <path d="M205 285L285 185L340 160L315 220Z" fill="#eef0f1" />
              <path d="M370 195L430 155L520 127L650 118L900 103L1070 93L1150 110L915 125L925 108L650 125L655 145L540 158L450 170L385 192Z" fill="#36373a" />
              <path d="M375 200L450 170L540 155L720 140L910 125L1140 115L1220 110L1320 145L1320 190L1050 210L840 195L775 270L600 240Z" fill="#b6bec5" />
              <path d="M1225 108L1320 45L1320 145Z" fill="#aeb7bf" />
              <path d="M50 350L65 315L125 302L130 350L110 385L80 392L50 370Z" fill="#afb8c0" />
              <path d="M50 355L105 375L110 385L80 392L55 375Z" fill="#55585b" />
              <!-- windshield -->
              <path d="M375 205L780 270L570 525L350 520L100 420L90 395L160 340Z" fill="#f2f3f4" />
              <path d="M160 338L375 205L290 305L160 400L100 420Z" fill="#8b9196" />
              <path d="M160 400L300 310L310 430L200 405Z" fill="#85898d" />
              <path d="M445 270L470 228L760 270L730 340L640 350L600 370L560 465L580 320L500 280Z" fill="#5b5d5f" />
              <path d="M570 460L640 350L700 340L660 425L590 470Z" fill="#5b6273" />
              <path d="M655 280L750 275L740 320L700 345L660 340Z" fill="#58595b" />
              <path d="M370 420L435 445L385 470Z" fill="#5f6163" />
              <path d="M95 420L160 400L300 430L370 470L440 458L550 470L570 525L350 522L210 485Z" fill="#75787b" />
              <path d="M375 205L780 270" stroke="#47484a" stroke-width="5" />
              <path d="M100 420L190 465M210 470L390 520" stroke="#2d2e2f" stroke-width="5" fill="none" />
              <!-- through driver's opening -->
              <path d="M670 450L750 380L790 385L800 430L720 490L680 520Z" fill="#3c4a66" />
              <path d="M750 378L785 385L802 430L770 450Z" fill="#3a3a3b" />
              <path d="M600 595L640 510L690 520L650 555Z" fill="#2c2d2e" />
              <!-- a-pillar and rail -->
              <path d="M775 272L1000 225L1080 225L1080 240L970 255L830 290L760 370L640 525L570 525L590 470Z" fill="#b1b9c0" />
              <path d="M765 268L800 225L870 190L1320 145L1320 160L1050 182L1050 207L830 215L790 265Z" fill="#393a3c" />
              <path d="M950 185L1030 178L1032 192L955 192Z" fill="#28292a" />
            </g>

            <!-- near roof rail, crop C -->
            <g transform="translate(780 410) scale(.33333)">
              <path d="M680 150L860 138L910 145L965 178L820 178L680 180Z" fill="#393a3c" />
              <path d="M690 158L855 150L855 162L710 178Z" fill="#2a2b2c" />
            </g>

            <!-- front, crop A coordinates -->
            <g transform="translate(370 500) scale(.33333)">
              <path d="M65 440L75 340L150 250L260 195L400 160L620 135L690 125L700 150L950 250L1050 265L1175 240L1192 320L1200 500L1180 780L1130 830L1000 560L780 530L640 720L610 800L450 800L450 720L350 650L60 520Z" fill="#a9b3bc" />
              <path d="M160 310L250 230L460 180L620 150L800 230L400 350L370 395L300 420L100 350Z" fill="url(#hoodg)" />
              <path d="M310 300L490 255L600 240L400 330Z" fill="#a3adb6" />
              <path d="M445 470L530 390L700 320L1000 265" stroke="#9ea8b1" stroke-width="2.500" fill="none" />
              <path d="M360 395L800 260" stroke="#bac2c9" stroke-width="3" fill="none" />
              <path d="M150 250L260 195L400 165L620 135" stroke="#7c8389" stroke-width="3" fill="none" />
              <path d="M620 145L680 135L695 150L650 172Z" fill="#2f3031" />
              <!-- grille -->
              <path d="M72 365L315 480L305 565L250 540L75 435Z" fill="#232425" />
              <path d="M65 398L300 497L300 510L70 412Z M85 425L300 520L300 530L90 436Z" fill="#f0f0f0" />
              <path d="M105 380L100 440M200 430L195 510M255 455L250 545" stroke="#232425" stroke-width="9" fill="none" />
              <path d="M122 420L150 420L170 445L185 445L182 495L165 490L150 470L128 470Z" fill="#f4f4f4" />
              <path d="M150 436L158 450L150 460L138 455Z" fill="#232425" />
              <!-- headlight -->
              <path d="M305 480L350 480L500 482L650 472L655 510L620 545L565 592L430 585L320 565Z" fill="#4a4c4e" />
              <path d="M340 530L500 545L565 582L430 576L345 565Z" fill="#e2e2e2" />
              <path d="M330 502L490 515L510 530L340 525Z" fill="#6c6e70" />
              <path d="M500 500L550 505L590 540L545 555Z" fill="#5a5c5e" />
              <!-- bumper -->
              <path d="M30 505L205 615L350 650L430 705L450 800L435 815L490 885L575 945L450 930L350 905L200 850L110 760L55 690L30 580Z" fill="#3c3e40" />
              <path d="M45 525L205 620L208 705L60 610Z" fill="#57595b" />
              <path d="M208 622L350 652L420 712L400 772L300 742L210 705Z" fill="#5d6062" />
              <path d="M50 610L215 710L280 740L340 870L200 800L100 740L60 690Z" fill="#303132" />
              <path d="M70 650L330 850M75 680L300 850M100 640L320 810M120 650L300 780" stroke="#55585a" stroke-width="5" stroke-dasharray="14 5" fill="none" />
              <path d="M335 810L388 803L400 880L345 865Z" fill="#55575a" />
              <path d="M120 770L200 850L350 905L450 930L575 945L500 885L440 882L345 872L200 805Z" fill="#8a939a" />
              <path d="M435 815L480 810L645 800L630 940L575 945L490 885Z" fill="#38393b" />
              <path d="M580 950L640 940L650 990L620 985Z" fill="#55575a" />
              <path d="M480 650L515 650L515 800L480 810Z" fill="#b5bdc4" />
              <!-- arch -->
              <path d="M610 800L640 715L780 535L900 510L1080 490L1180 580L1225 680L1180 800L1130 825L1115 700L1050 610L950 570L800 610L700 690L650 800L640 930Z" fill="#3b3c3e" />
              <path d="M980 570L1080 590L1165 740L1130 830L1100 700Z" fill="#696b6d" />
              <!-- wheel -->
              <ellipse cx="883" cy="868" rx="237" ry="240" fill="#3c3d3f" />
              <ellipse cx="865" cy="868" rx="181" ry="174" fill="#dedede" stroke="#222" stroke-width="3" />
              <path d="M880 705L985 770L945 850L1030 850L1030 940L940 970L930 1030L830 1030L825 950L740 975L695 910L750 860L730 790L770 725L830 745Z" fill="#232425" />
              <path d="M760 745L800 745L830 790L790 825L750 790Z" fill="#d0d0d0" />
              <path d="M890 735L965 770L945 805L900 780Z" fill="#e8e8e8" />
              <path d="M945 865L1010 850L1020 905L985 915Z" fill="#ececec" />
              <path d="M850 960L895 925L925 965L910 1000L845 995Z" fill="#e0e0e0" />
              <path d="M850 975L915 970L910 998L845 995Z" fill="#3a3a3b" />
              <path d="M730 875L800 870L805 905L755 940L725 905Z" fill="#b9c6d8" />
              <circle v-for="b in bolts" :key="b[0]" :cx="b[0]" :cy="b[1]" r="7" fill="#c8c8c8" />
              <rect x="845" y="858" width="26" height="9" fill="#a86b3c" />
            </g>

            <!-- door, crop C coordinates -->
            <g transform="translate(780 410) scale(.33333)">
              <path d="M-38 600L0 555L50 530L90 560L200 575L715 560L680 895L675 1022L65 1000L62 760L152 712L152 635L-38 630Z" fill="url(#doorg)" />
              <path d="M-38 630L152 635L152 712L62 760L62 1000L-5 1075L-50 1068Z" fill="#37383a" />
              <path d="M15 650L50 650L50 695L15 695Z" fill="#29292b" />
              <path d="M45 1005L675 1022L672 1092L60 1070L0 1100L-20 1075Z" fill="#3a3b3c" />
              <path fill-rule="evenodd" d="M30 540L130 450L250 355L380 300L500 285L768 288L718 560L215 568L205 575L100 560Z M210 550L170 475L250 410L300 368L380 320L505 305L710 305L645 550Z" fill="#3a3b3d" />
              <path d="M380 322L505 307L710 307" stroke="#8b8f92" stroke-width="2" fill="none" />
              <path d="M92 510L130 462L170 465L205 500L218 545L205 575L140 560L100 540Z" fill="#b0b8bf" />
              <path d="M125 558L215 548L205 575L150 572Z" fill="#333436" />
              <ellipse cx="562" cy="690" rx="38" ry="30" fill="#8f98a0" />
              <rect x="480" y="668" width="172" height="30" rx="15" fill="#b2bac1" />
            </g>
          </svg>
          <svg class="axis" width="26" height="32" viewBox="0 0 26 32">
            <path d="M11 24V6" stroke="#3fb55c" stroke-width="1" />
            <path d="M11 24L23 27" stroke="#d93a3a" stroke-width="1" />
            <path d="M11 24L4 30" stroke="#3a6fd9" stroke-width="1" />
          </svg>
        </div>
      </section>

      <aside class="right">
        <section class="outliner">
          <div class="tab out-tab">Outliner</div>
          <div class="sub">
            <div class="rmenu out-menu"><span>Display</span><span>Show</span><span>Help</span></div>
            <div class="search-row">
              <svg width="16" height="16"><use href="#outf" /></svg>
              <div class="search"><span>Search...</span><i class="tri"></i></div>
            </div>
            <div class="tree">
              <div v-for="n in tree" :key="n.t" class="row" :class="['d' + n.d, { dim: n.dim }]">
                <i v-if="n.top" class="vline v1 v1top"></i>
                <i v-if="n.l1" class="vline v1"></i>
                <i v-if="n.open" class="vline v2 v2top"></i>
                <i v-if="n.l2" class="vline v2"></i>
                <i v-if="n.l1 && !n.l2" class="hline h1"></i>
                <i v-if="n.dot" class="hline h2"></i>
                <i v-if="n.dot" class="dot"></i>
                <i v-if="n.e" class="exp" :class="n.e"></i>
                <svg class="ricon" width="17" height="17"><use :href="'#' + n.i" /></svg>
                <span>{{ n.t }}</span>
              </div>
              <div class="vscroll"><i class="tri tri-up"></i><b></b><i class="tri"></i></div>
            </div>
            <div class="hscroll"><i class="tri tri-left"></i><b></b><i class="tri tri-right"></i></div>
            <div class="dotline dl1"></div>
          </div>
        </section>

        <section class="channel">
          <div class="tab ch-tab">Channel Box / Layer Editor</div>
          <div class="sub">
            <div class="ch-icons">
              <svg width="16" height="16"><use href="#gizmo" /></svg>
              <svg width="15" height="15"><use href="#chanset" /></svg>
              <svg width="15" height="15"><use href="#cgraph" /></svg>
            </div>
            <div class="rmenu ch-menu"><span>Channels</span><span>Edit</span><span>Object</span><span>Show</span></div>
            <div class="ch-box"></div>
            <div class="dotline dl2"></div>
            <div class="layer">
              <div class="ltabs"><div class="tab lt">Display</div><div class="tab lt off">Anim</div></div>
              <div class="lbody">
                <div class="rmenu l-menu"><span>Layers</span><span>Options</span><span>Help</span></div>
                <div class="l-icons">
                  <svg width="16" height="16"><use href="#lup" /></svg>
                  <svg width="16" height="16"><use href="#ldn" /></svg>
                  <svg width="16" height="16"><use href="#ladd" /></svg>
                  <svg width="16" height="16"><use href="#lsel" /></svg>
                </div>
                <div class="l-list">
                  <div v-for="l in layers" :key="l.n" class="lrow" :class="{ sel: l.sel }">
                    <b>V</b><b>P</b><b>{{ l.r }}</b>
                    <i class="swatch" :style="{ background: l.c }"></i>
                    <span>{{ l.n }}</span>
                  </div>
                  <div class="hscroll l-scroll"><i class="tri tri-left"></i><b></b><i class="tri tri-right"></i></div>
                </div>
              </div>
            </div>
          </div>
        </section>
      </aside>
    </main>

    <section class="timebar">
      <span class="grip grip-b"></span>
      <div class="time">
        <div class="cur">1</div>
        <div v-for="t in ticks" :key="t" class="seg"><span>{{ t }}</span></div>
      </div>
      <div class="fld curf">1</div>
      <div class="play">
        <div v-for="(it, k) in play" :key="k" class="cell" :style="{ width: it.w + 'px', marginLeft: (k ? it.ml : 10) + 'px' }">
          <svg width="15" height="15"><use :href="'#' + it.name" /></svg>
        </div>
      </div>
    </section>

    <section class="rangebar">
      <span class="grip grip-b"></span>
      <div class="fld f88">1</div>
      <div class="fld f88">1</div>
      <div class="range">
        <div class="rbar"><i class="knob"></i><span>1</span><span class="re">120</span><i class="knob"></i></div>
      </div>
      <div class="fld f88 f120">120</div>
      <div class="fld f88">200</div>
      <span class="sep sepr"></span>
      <i class="htri h-a"></i>
      <div class="field charset">No Character Set</div>
      <i class="htri h-b"></i>
      <div class="field animl">No Anim Layer</div>
      <span class="sep sepr2"></span>
      <div class="dd fps"><span>24 fps</span><i class="dd-arrow"></i></div>
      <svg class="ri1" width="19" height="19"><use href="#loop" /></svg>
      <span class="sep sepr3"></span>
      <svg class="ri2" width="19" height="19"><use href="#autok" /></svg>
      <svg class="ri3" width="21" height="21"><use href="#run" /></svg>
    </section>

    <section class="cmdbar">
      <span class="grip grip-b"></span>
      <span class="mel">MEL</span>
      <div class="cmd c1"></div>
      <div class="cmd c2"></div>
      <div class="script">{;}</div>
    </section>

    <section class="helpbar">
      <span class="grip grip-b"></span>
      <span>Preparing ray server... [Press ESC to Cancel]</span>
    </section>
    <div class="bottom"></div>

    <svg class="bigm" width="34" height="31"><use href="#logo" /></svg>
  </div>
</template>

<style>
html, body { margin: 0; background: #444; }
</style>

<style scoped>
* { box-sizing: border-box; }
i { display: block; font-style: normal; }
.app { position: relative; width: 1920px; height: 1080px; overflow: hidden; background: #444; color: #c6c6c6; display: flex; flex-direction: column; font: 11px/1 Roboto, "Liberation Sans", sans-serif; }
.defs { position: absolute; }
svg { display: block; flex: none; }

.title { height: 22px; background: #4b4a47; display: flex; align-items: center; color: #e2e2e2; font-size: 11.68px; flex: none; }
.logo2 { margin-left: 2px; }
.title-text { margin-left: 4px; white-space: nowrap; }
.winbtns { margin-left: auto; display: flex; align-items: center; gap: 31px; padding-right: 17px; }

.menubar { height: 23px; flex: none; display: flex; align-items: center; gap: 15px; padding-left: 9px; font-size: 11.4px; letter-spacing: .055px; color: #c4c4c4; background: #444; }
.workspace { margin-left: auto; display: flex; align-items: center; padding-right: 6px; color: #aaa; }
.ws-label { margin-right: 8px; }
.ws-dd { width: 191px; height: 19px; margin-right: 7px; }

.dd { position: relative; display: flex; align-items: center; background: #5c5c5c; color: #b9b9b9; padding-left: 3px; }
.dd-arrow { position: absolute; right: 0; top: 0; bottom: 0; width: 19px; background: #656565; border-left: 1px solid #4f4f4f; }
.dd-arrow::after { content: ""; position: absolute; left: 5px; top: 50%; margin-top: -3px; border: 5px solid transparent; border-top: 6px solid #c8c8c8; border-bottom: 0; }
.tri { width: 0; height: 0; border: 5px solid transparent; border-top: 6px solid #b5b5b5; border-bottom: 0; flex: none; }
.tri-up { border-top: 0; border-bottom: 6px solid #b5b5b5; }
.tri-left { border: 4px solid transparent; border-right: 5px solid #b5b5b5; border-left: 0; }
.tri-right { border: 4px solid transparent; border-left: 5px solid #b5b5b5; border-right: 0; }
.tri-small { border-width: 4px; border-top-width: 5px; margin-left: 4.5px; border-top-color: #777; }
.tri-sym { margin-left: 13.5px; }

.status { height: 34px; flex: none; display: flex; align-items: center; border-bottom: 2px solid #363636; position: relative; padding-top: 4px; background: #444; }
.grip { width: 4px; height: 22px; margin-left: 4px; flex: none; background-image: radial-gradient(#777 .7px, transparent .8px); background-size: 3px 3px; }
.grip-tall { height: 43px; }
.grip-b { height: 28px; margin-left: 49px; }
.mode-dd { width: 97px; height: 20px; margin-left: 6px; color: #b4b4b4; font-size: 11.5px; }
.cell { flex: none; display: flex; align-items: center; justify-content: center; height: 22px; }
.cell.act { background: #5285a6; }
.cell.drk { background: #333; }
.cell.sep, .sep { width: 3px; height: 20px; background: linear-gradient(#444 0, #444 2px, #8c8c8c 2px, #8c8c8c 18px, #444 18px); flex: none; }
.cell.col { height: 16px; width: 4px; background: #5c5c5c; clip-path: polygon(0 0, 100% 50%, 0 100%); }
.field { height: 21px; border: 1px solid #505050; border-radius: 2px; display: flex; align-items: center; padding-left: 4px; color: #b8b8b8; flex: none; font-size: 11.3px; }
.live { width: 97px; margin-left: 7px; }
.sep-sym { margin-left: 13.5px; }
.sym { width: 99px; margin-left: 6px; }
.st2 { display: flex; align-items: center; margin-left: 0; }
.sign { width: 120px; height: 22px; margin-left: 10px; padding-left: 3px; gap: 6px; color: #e4e4e4; font-size: 12px; background: #5a5a5a; }
.sign .tri { position: absolute; right: 4px; top: 8px; }
.st3 { display: flex; align-items: center; margin-left: auto; padding-right: 3px; }

.shelf { height: 49px; flex: none; display: flex; align-items: center; position: relative; }
.shelf-tab { width: 20px; height: 43px; margin-left: 6px; background: #3a3a3a; display: flex; flex-direction: column; align-items: center; justify-content: space-around; padding: 5px 0; flex: none; }
.eq { width: 10px; height: 5px; border-top: 2px solid #8c8c8c; border-bottom: 2px solid #8c8c8c; }
.gear { width: 9px; height: 9px; border: 2px solid #9c9c9c; border-radius: 50%; }
.shelf .cell { height: 40px; }
.shelf .cell.sep { height: 30px; width: 2px; background: #8a8a8a; }
.shelf-scroll { margin-left: auto; margin-right: 3px; width: 14px; height: 34px; background: #3c3c3c; display: flex; flex-direction: column; align-items: center; justify-content: space-between; padding: 4px 0; }
.shelf-scroll b { width: 10px; height: 10px; border-radius: 50%; background: #666; }

.main { height: 817px; flex: none; display: flex; background: #3a3a3a; }
.left { width: 45px; flex: none; background: #444; display: flex; flex-direction: column; align-items: center; border-top: 1px solid #3a3a3a; }
.hgrip { width: 36px; height: 3px; margin: 4px 0 0; background-image: radial-gradient(#777 .7px, transparent .8px); background-size: 3px 3px; }
.tools { display: flex; flex-direction: column; margin-top: 6px; }
.tool { width: 36px; height: 37px; display: flex; align-items: center; justify-content: center; }
.tool.on { background: #5285a6; }
.left-rule { width: 36px; height: 3px; background: #8c8c8c; margin-top: 79px; }
.layouts { display: flex; flex-direction: column; align-items: center; gap: 9px; margin-top: 9px; }
.layouts .tool { margin-top: -4px; height: 36px; }

.panel { width: 1501px; margin: 6px 0 3px 4px; background: #444; border-top: 1px solid #808080; display: flex; flex-direction: column; flex: none; }
.p-menu { height: 20px; display: flex; gap: 16px; align-items: center; padding-left: 9px; font-size: 11.3px; letter-spacing: .1px; color: #c0c0c0; flex: none; }
.p-tools { height: 18px; display: flex; align-items: center; position: relative; flex: none; }
.p-tools .cell { height: 18px; }
.p-tools .cell.sep { height: 17px; width: 3px; }
.vf { height: 17px; border-radius: 2px; background: #2c2c2c; color: #c4c4c4; padding-left: 5px; display: flex; align-items: center; flex: none; }
.v0 { width: 38px; margin-left: 2px; }
.v1f { width: 37px; margin-left: 5px; }
.halfi { margin-left: 5px; }
.onbtn { width: 18px; height: 18px; margin-left: 3px; background: #5285a6; display: flex; align-items: center; justify-content: center; flex: none; }
.gamma { width: 163px; height: 17px; margin-left: 3px; font-size: 11.3px; background: #5c5c5c; }
.viewport { position: relative; flex: 1; background: #fff; border-bottom: 2px solid #8a8a8a; overflow: hidden; margin-right: 1px; }
.car { position: absolute; left: -49px; top: -173px; width: 1920px; height: 1080px; }
.axis { position: absolute; left: 8px; top: 723px; }

.right { width: 365px; flex: none; margin-left: 5px; background: #3c3c3c; border-left: 2px solid #333; display: flex; flex-direction: column; padding-left: 1px; }
.tab { background: #444; color: #d4d4d4; display: flex; align-items: center; border-radius: 2px 2px 0 0; padding-top: 1px; }
.out-tab { width: 64px; height: 16px; margin-top: 5px; padding-left: 10px; }
.sub { background: #444; position: relative; }
.outliner { height: 495px; display: flex; flex-direction: column; flex: none; }
.outliner > .sub { flex: 1; }
.rmenu { display: flex; align-items: center; color: #c0c0c0; letter-spacing: .1px; }
.out-menu { height: 22px; padding-left: 9px; gap: 16px; padding-top: 1px; }
.search-row { height: 22px; display: flex; align-items: flex-start; padding-left: 7px; gap: 6px; margin-top: 5px; }
.search { width: 329px; height: 18px; background: #2c2c2c; color: #7a7a7a; display: flex; align-items: center; justify-content: space-between; padding: 0 4px 0 3px; border-radius: 2px; }
.tree { position: relative; height: 402px; margin: -2px 0 0 0; background: #393939; overflow: hidden; width: 360px; }
.row { position: relative; height: 20px; display: flex; align-items: center; color: #c4c4c4; white-space: nowrap; font-size: 11.5px; }
.row.dim { color: #6f6f6f; }
.d0 { padding-left: 35px; }
.d1 { padding-left: 47px; }
.d2 { padding-left: 59px; }
.ricon { margin-right: 3.5px; }
.vline { position: absolute; top: 0; bottom: 0; width: 1px; background: #8f8f8f; }
.v1 { left: 26px; }
.v2 { left: 38px; }
.v1top { top: 10px; }
.v2top { top: 10px; }
.hline { position: absolute; top: 10px; height: 1px; background: #8f8f8f; }
.h1 { left: 26px; width: 8px; }
.h2 { left: 38px; width: 10px; }
.dot { position: absolute; left: 47px; top: 8px; width: 5px; height: 5px; border-radius: 50%; background: #9a9a9a; }
.exp { position: absolute; top: 5px; width: 9px; height: 9px; border: 1px solid #9a9a9a; background: #393939; }
.exp::before { content: ""; position: absolute; left: 1px; right: 1px; top: 3px; height: 1px; background: #9a9a9a; }
.exp.plus::after { content: ""; position: absolute; top: 1px; bottom: 1px; left: 3px; width: 1px; background: #9a9a9a; }
.d0 .exp { left: 22px; }
.d1 .exp { left: 34px; }
.vscroll { position: absolute; right: 0; top: 0; bottom: 0; width: 10px; display: flex; flex-direction: column; align-items: center; padding-top: 4px; background: #393939; }
.vscroll b { width: 9px; height: 115px; border-radius: 4px; background: #626262; margin-top: 2px; margin-bottom: auto; }
.vscroll .tri { border-width: 4px; }
.vscroll .tri:last-child { margin-bottom: 9px; border-top-width: 5px; }
.hscroll { height: 11px; display: flex; align-items: center; padding: 0 20px 0 5px; gap: 3px; width: 360px; background: #393939; }
.hscroll b { flex: 1; height: 10px; border-radius: 5px; background: #626262; }
.dotline { height: 2px; background-image: radial-gradient(#6f6f6f .6px, transparent .7px); background-size: 3px 2px; background-repeat: repeat-x; }
.dl1 { width: 118px; margin: 1px 0 0 121px; }
.channel { flex: 1; display: flex; flex-direction: column; }
.ch-tab { width: 155px; height: 16px; padding-left: 10px; }
.ch-icons { height: 22px; display: flex; justify-content: flex-end; align-items: center; gap: 7px; padding: 0 6px 0 0; }
.ch-menu { height: 21px; padding-left: 10px; gap: 16px; }
.ch-box { width: 355px; height: 75px; margin-left: 3px; background: #2c2c2c; }
.dl2 { width: 118px; margin: 2px 0 0 121px; }
.layer { margin-top: 9px; background: #3c3c3c; margin-left: 3px; }
.ltabs { display: flex; gap: 3px; padding-left: 1px; padding-top: 2px; }
.lt { width: 58px; height: 16px; justify-content: center; padding-right: 8px; }
.lt.off { width: 46px; background: #3e3e3e; color: #7a7a7a; padding-right: 0; border: 1px solid #4a4a4a; border-bottom: 0; }
.lbody { background: #444; height: 155px; }
.l-menu { height: 22px; padding-left: 9px; gap: 16px; }
.l-icons { height: 21px; display: flex; justify-content: flex-end; padding-right: 14px; gap: 7px; align-items: center; }
.l-icons svg:nth-child(3) { margin-left: 5px; }
.l-list { margin: 5px 0 0 3px; width: 347px; background: #2f2f2f; height: 112px; }
.lrow { height: 20.2px; display: flex; align-items: center; padding-left: 3px; gap: 3px; color: #d4d4d4; font-size: 11.5px; }
.lrow b { width: 20px; height: 17px; font-weight: 400; display: flex; align-items: center; justify-content: center; border: 1px solid #444; border-radius: 3px; background: #363636; color: #d8d8d8; font-size: 11px; }
.lrow.sel { background: #5285a6; color: #1e1e1e; }
.lrow.sel b { background: #5285a6; border-color: #3e3e3e; color: #1e1e1e; }
.swatch { width: 16px; height: 16px; margin-right: 0; }
.l-scroll { margin: 7px 0 0 0; width: 347px; padding: 0 6px 0 4px; background: #2f2f2f; }

.timebar { height: 41px; flex: none; display: flex; align-items: center; border-bottom: 2px solid #3a3a3a; padding-top: 3px; }
.timebar .grip-b { margin-left: 49px; margin-right: 6px; }
.time { position: relative; width: 1566px; height: 28px; background: #2d2d2d; display: flex; padding-left: 60px; }
.cur { position: absolute; left: 9px; top: 0; bottom: 0; width: 11px; background: #555; color: #eee; font-size: 11px; display: flex; align-items: flex-end; padding: 0 0 3px 2px; }
.seg { position: relative; width: 64.6px; height: 28px; flex: none; color: #6e6e6e; font-size: 10.5px; }
.seg::before { content: ""; position: absolute; left: 0; bottom: 0; height: 15px; width: 1px; background: #a8a8a8; }
.seg span { position: absolute; left: 2px; top: 1px; }
.seg:last-child { width: 20px; }
.fld { height: 18px; background: #2c2c2c; border-radius: 2px; display: flex; align-items: center; padding-left: 5px; color: #c4c4c4; flex: none; }
.curf { width: 88px; margin-left: 7px; margin-top: -4px; }
.play { display: flex; align-items: center; margin-top: -4px; }
.rangebar { height: 36px; flex: none; display: flex; align-items: center; border-bottom: 2px solid #3a3a3a; padding-bottom: 1px; }
.rangebar .grip-b { margin-right: 7px; height: 25px; }
.f88 { width: 88px; height: 25px; margin-right: 8px; }
.range { width: 976px; height: 25px; background: #3c3c3c; margin-right: 5px; margin-left: -1px; flex: none; padding: 2px 0 2px 5px; }
.rbar { width: 590px; height: 20px; background: #5c5c5c; border-radius: 3px; display: flex; align-items: center; padding: 0 5px; gap: 4px; color: #c4c4c4; }
.knob { width: 15px; height: 15px; background: #8f8f8f; border-radius: 3px; flex: none; }
.re { margin-left: auto; margin-right: 5px; }
.f120 { margin-right: 9px; }
.sepr { height: 22px; margin-left: -3.500px; }
.htri { width: 0; height: 0; border: 5px solid transparent; border-top: 6px solid #999; border-bottom: 0; flex: none; position: relative; }
.h-a { margin: 0 8px 0 13px; }
.h-b { margin: 0 7px 0 11px; }
.charset { width: 100px; height: 25px; padding-left: 5px; font-size: 11.4px; }
.animl { width: 101px; height: 25px; padding-left: 5px; font-size: 11.4px; }
.sepr2 { margin-left: 9.500px; height: 22px; }
.fps { width: 95px; height: 19px; margin-left: 12.500px; }
.ri1 { margin-left: 12.500px; }
.sepr3 { margin-left: 11px; height: 22px; }
.ri2 { margin-left: 11px; }
.ri3 { margin-left: 8px; }
.cmdbar { height: 33px; flex: none; display: flex; align-items: center; border-bottom: 2px solid #3a3a3a; }
.cmdbar .grip-b { height: 25px; }
.mel { width: 30px; margin-left: 17px; color: #e2e2e2; }
.cmd { height: 22px; background: #2c2c2c; border-radius: 2px; flex: none; }
.c1 { width: 646px; margin-left: 5px; }
.c2 { width: 1128px; margin-left: 8px; margin-right: 6px; }
.script { width: 19px; height: 18px; background: #c0c0c0; border-top: 2px solid #8e8e8e; color: #444; font: 9.5px/15px "Liberation Mono", monospace; text-align: center; flex: none; }
.helpbar { height: 23px; flex: none; display: flex; align-items: center; color: #aaa; font-size: 10.3px; padding-top: 4px; }
.helpbar .grip-b { height: 18px; margin-right: 17px; }
.bottom { flex: 1; background: #262626; }
.bigm { position: absolute; left: 6px; top: 1043px; }
</style>
